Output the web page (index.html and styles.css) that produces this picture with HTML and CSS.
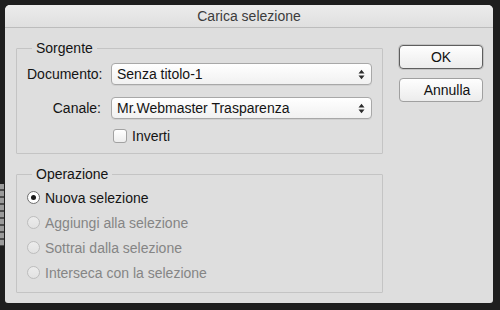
FILE: index.html
```html
<!DOCTYPE html>
<html lang="it">
<head>
<meta charset="utf-8">
<title>Carica selezione</title>
<link rel="stylesheet" href="styles.css">
</head>
<body>
<div class="edge"></div>
<div class="win">
  <div class="titlebar">Carica selezione</div>
  <div class="content">
    <div class="left">
      <fieldset class="group src">
        <legend>Sorgente</legend>
        <div class="form">
          <span class="lbl">Documento:</span>
          <div class="select"><span>Senza titolo-1</span>
            <svg class="arr" width="7" height="11" viewBox="0 0 7 11"><path d="M0.5 4.5 L3.5 0.8 L6.5 4.5 Z M0.5 6.5 L3.5 10.2 L6.5 6.5 Z"/></svg>
          </div>
          <span class="lbl">Canale:</span>
          <div class="select"><span>Mr.Webmaster Trasparenza</span>
            <svg class="arr" width="7" height="11" viewBox="0 0 7 11"><path d="M0.5 4.5 L3.5 0.8 L6.5 4.5 Z M0.5 6.5 L3.5 10.2 L6.5 6.5 Z"/></svg>
          </div>
          <span></span>
          <div class="check"><span class="box"></span><span>Inverti</span></div>
        </div>
      </fieldset>
      <fieldset class="group op">
        <legend>Operazione</legend>
        <div class="radio on"><span class="dot"></span><span>Nuova selezione</span></div>
        <div class="radio off"><span class="dot"></span><span>Aggiungi alla selezione</span></div>
        <div class="radio off"><span class="dot"></span><span>Sottrai dalla selezione</span></div>
        <div class="radio off"><span class="dot"></span><span>Interseca con la selezione</span></div>
      </fieldset>
    </div>
    <div class="buttons">
      <button class="btn default">OK</button>
      <button class="btn cancel">Annulla</button>
    </div>
  </div>
</div>
</body>
</html>
```
FILE: styles.css
```css
html, body {
  margin: 0;
  padding: 0;
}
body {
  width: 500px;
  height: 310px;
  background: #1e1e1e;
  font-family: "Liberation Sans", Arial, sans-serif;
  font-size: 14px;
  color: #141414;
  position: relative;
  overflow: hidden;
}
.edge {
  position: absolute;
  left: 0;
  top: 184px;
  width: 4px;
  height: 62px;
  background: repeating-linear-gradient(#9a9a9a 0 5px, #4a4a4a 5px 7px);
}
.win {
  position: relative;
  margin: 5px 0 0 5px;
  width: 488px;
  height: 298px;
  background: #dedede;
  border-radius: 5px 5px 3px 3px;
  overflow: hidden;
  display: flex;
  flex-direction: column;
}
.titlebar {
  height: 22px;
  line-height: 23px;
  text-align: center;
  border-bottom: 1px solid #bcbcbc;
  background: linear-gradient(#ececec, #dfdfdf);
  color: #3c3c3c;
}
.content {
  display: flex;
  gap: 16px;
  padding: 12px 10px 0 11px;
}
.left {
  width: 367px;
  display: flex;
  flex-direction: column;
  gap: 12px;
}
fieldset.group {
  margin: 0;
  min-width: 0;
  border: 1px solid #c4c4c4;
  border-radius: 1px;
}
fieldset.group legend {
  padding: 0 4px;
  margin-left: 5px;
  line-height: 16px;
  height: 16px;
  color: #141414;
}
.src {
  padding: 7px 10px 9px 10px;
}
.form {
  display: grid;
  grid-template-columns: 74px 261px;
  column-gap: 10px;
  row-gap: 12px;
}
.lbl {
  text-align: right;
  align-self: center;
  white-space: nowrap;
}
.select {
  box-sizing: border-box;
  height: 22px;
  display: flex;
  align-items: center;
  justify-content: space-between;
  padding: 0 6px 0 5px;
  border: 1px solid #a8a8a8;
  border-radius: 4px;
  background: linear-gradient(#ffffff, #f1f1f1);
  box-shadow: 0 1px 0 rgba(0, 0, 0, 0.06);
}
.arr path {
  fill: #2c2c2c;
}
.check {
  margin-top: -3px;
  margin-left: 2px;
  height: 16px;
  display: flex;
  align-items: center;
  gap: 5px;
}
.box {
  box-sizing: border-box;
  width: 14px;
  height: 14px;
  border: 1px solid #a2a2a2;
  border-radius: 3px;
  background: linear-gradient(#ffffff, #ededed);
}
.op {
  padding: 3px 10px 7px 10px;
}
.radio {
  height: 25px;
  display: flex;
  align-items: center;
  gap: 5px;
}
.dot {
  box-sizing: border-box;
  width: 13px;
  height: 13px;
  border-radius: 50%;
  display: flex;
  align-items: center;
  justify-content: center;
}
.on .dot {
  border: 1px solid #6e6e6e;
  background: #ffffff;
}
.on .dot::after {
  content: "";
  width: 5px;
  height: 5px;
  border-radius: 50%;
  background: #1a1a1a;
}
.off .dot {
  border: 1px solid #bdbdbd;
  background: linear-gradient(#ececec, #e2e2e2);
}
.off {
  color: #858585;
}
.buttons {
  display: flex;
  flex-direction: column;
  gap: 9px;
  padding-top: 5px;
}
.btn {
  box-sizing: border-box;
  width: 84px;
  height: 24px;
  padding: 0;
  font-family: inherit;
  font-size: 14px;
  color: #111;
  border: 1px solid #a0a0a0;
  border-radius: 4px;
  background: linear-gradient(#fefefe, #ececec);
}
.default {
  border-color: #5e5e5e;
  box-shadow: 0 0 0 1px rgba(0, 0, 0, 0.12);
}
.cancel {
  padding-left: 12px;
}
```
